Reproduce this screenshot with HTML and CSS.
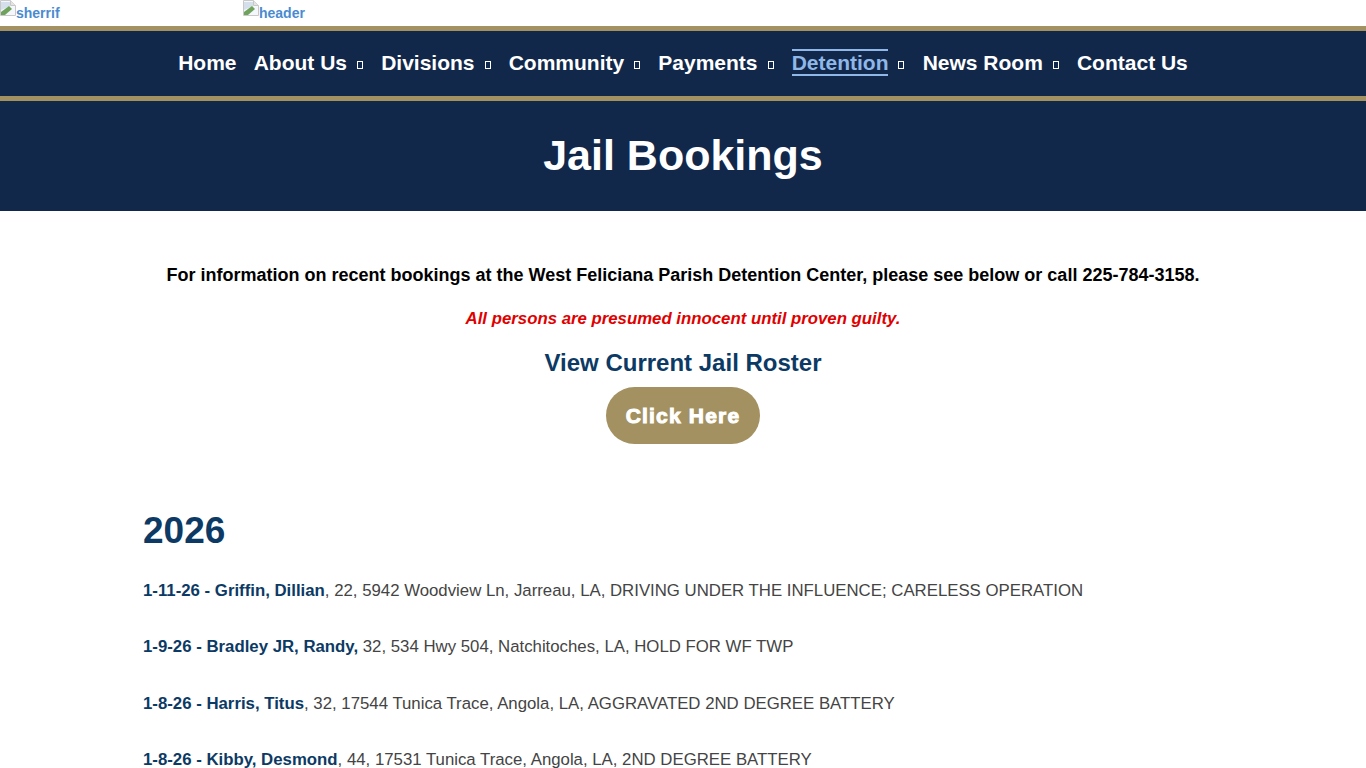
FILE: index.html
```html
<!DOCTYPE html>
<html lang="en">
<head>
    <meta charset="UTF-8">
    <title>Jail Bookings</title>
    <link rel="stylesheet" href="styles.css">
</head>
<body>
    <header class="top-logos">
        <a class="broken-img sherrif-img" href="#">
            <svg width="16" height="16" viewBox="0 0 16 16"><path d="M0.5 0.5H10.5L15.5 5.5V15.5H0.5Z" fill="#f4f7fb" stroke="#c8c8c8"/><path d="M10.5 0.5V5.5H15.5" fill="#e4e4e4" stroke="#c8c8c8"/><path d="M1 2H10V6L1 10Z" fill="#d5dfec"/><path d="M1 15V12L9 6L12 9L5 15Z" fill="#6fa35c"/></svg>sherrif</a>
        <a class="broken-img" href="#">
            <svg width="16" height="16" viewBox="0 0 16 16"><path d="M0.5 0.5H10.5L15.5 5.5V15.5H0.5Z" fill="#f4f7fb" stroke="#c8c8c8"/><path d="M10.5 0.5V5.5H15.5" fill="#e4e4e4" stroke="#c8c8c8"/><path d="M1 2H10V6L1 10Z" fill="#d5dfec"/><path d="M1 15V12L9 6L12 9L5 15Z" fill="#6fa35c"/></svg>header</a>
    </header>

    <nav class="main-nav">
        <a href="#">Home</a>
        <a class="has-sub" href="#">About Us</a>
        <a class="has-sub" href="#">Divisions</a>
        <a class="has-sub" href="#">Community</a>
        <a class="has-sub" href="#">Payments</a>
        <a class="has-sub active" href="#"><span>Detention</span></a>
        <a class="has-sub" href="#">News Room</a>
        <a href="#">Contact Us</a>
    </nav>

    <section class="page-title">
        <h1>Jail Bookings</h1>
    </section>

    <main class="content">
        <p class="intro">For information on recent bookings at the West Feliciana Parish Detention Center, please see below or call 225-784-3158.</p>
        <p class="notice">All persons are presumed innocent until proven guilty.</p>
        <h3 class="roster-title">View Current Jail Roster</h3>
        <div class="roster-action"><a class="click-btn" href="#">Click Here</a></div>

        <h2 class="year">2026</h2>
        <p class="booking"><strong>1-11-26 - Griffin, Dillian</strong>, 22, 5942 Woodview Ln, Jarreau, LA, DRIVING UNDER THE INFLUENCE; CARELESS OPERATION</p>
        <p class="booking"><strong>1-9-26 - Bradley JR, Randy,</strong> 32, 534 Hwy 504, Natchitoches, LA, HOLD FOR WF TWP</p>
        <p class="booking"><strong>1-8-26 - Harris, Titus</strong>, 32, 17544 Tunica Trace, Angola, LA, AGGRAVATED 2ND DEGREE BATTERY</p>
        <p class="booking"><strong>1-8-26 - Kibby, Desmond</strong>, 44, 17531 Tunica Trace, Angola, LA, 2ND DEGREE BATTERY</p>
    </main>
</body>
</html>
```

FILE: styles.css
```css
* {
    margin: 0;
    padding: 0;
    box-sizing: border-box;
}

html, body {
    height: 768px;
    overflow: hidden;
}

body {
    font-family: "Liberation Sans", Arial, sans-serif;
    background: #fff;
    color: #444;
}

a {
    text-decoration: none;
}

.top-logos {
    display: flex;
    height: 26px;
}

.broken-img {
    display: block;
    height: 16px;
    font-size: 14px;
    line-height: 16px;
    margin-top: 5px;
    font-weight: 700;
    color: #4a8bd0;
    white-space: nowrap;
}

.broken-img svg {
    vertical-align: top;
    margin-top: -5px;
}

.sherrif-img {
    width: 243px;
}

.main-nav {
    display: flex;
    justify-content: center;
    align-items: center;
    gap: 17.15px;
    height: 75px;
    padding-bottom: 2px;
    background: #12284b;
    border-top: 5px solid #a39161;
    border-bottom: 5px solid #a39161;
}

.main-nav a {
    display: flex;
    align-items: center;
    font-size: 21px;
    font-weight: 700;
    color: #fff;
    line-height: 24px;
}

.main-nav .has-sub::after {
    content: "";
    width: 4px;
    height: 6px;
    margin-left: 10px;
    margin-right: 1px;
    margin-top: 4px;
    border: 1px solid #fff;
}

.main-nav .active span {
    color: #8fb8e8;
    line-height: 23px;
    border-top: 2px solid #8fb8e8;
    border-bottom: 2px solid #8fb8e8;
}

.page-title {
    height: 110px;
    background: #12284b;
    text-align: center;
}

.page-title h1 {
    font-size: 43px;
    line-height: 108px;
    color: #fff;
}

.content {
    padding: 0 143px;
}

.intro {
    margin-top: 53px;
    font-size: 18px;
    line-height: 22px;
    font-weight: 700;
    color: #000;
    text-align: center;
    white-space: nowrap;
}

.notice {
    margin-top: 23px;
    font-size: 16.8px;
    line-height: 20px;
    font-weight: 700;
    font-style: italic;
    color: #e00000;
    text-align: center;
}

.roster-title {
    margin-top: 19px;
    font-size: 24px;
    line-height: 30px;
    color: #0c3a64;
    text-align: center;
}

.roster-action {
    display: flex;
    justify-content: center;
    margin-top: 9px;
}

.click-btn {
    display: block;
    width: 154px;
    height: 57px;
    border-radius: 29px;
    background: #a39161;
    color: #fff;
    font-size: 21px;
    font-weight: 700;
    line-height: 57px;
    text-align: center;
    letter-spacing: 1.2px;
    -webkit-text-stroke: 1px #fff;
}

.year {
    margin-top: 64px;
    font-size: 37px;
    line-height: 46px;
    color: #0c3a64;
}

.booking {
    margin-top: 26.3px;
    font-size: 16.8px;
    line-height: 30px;
    white-space: nowrap;
}

.year + .booking {
    margin-top: 22px;
}

.booking strong {
    color: #0c3a64;
}
```
